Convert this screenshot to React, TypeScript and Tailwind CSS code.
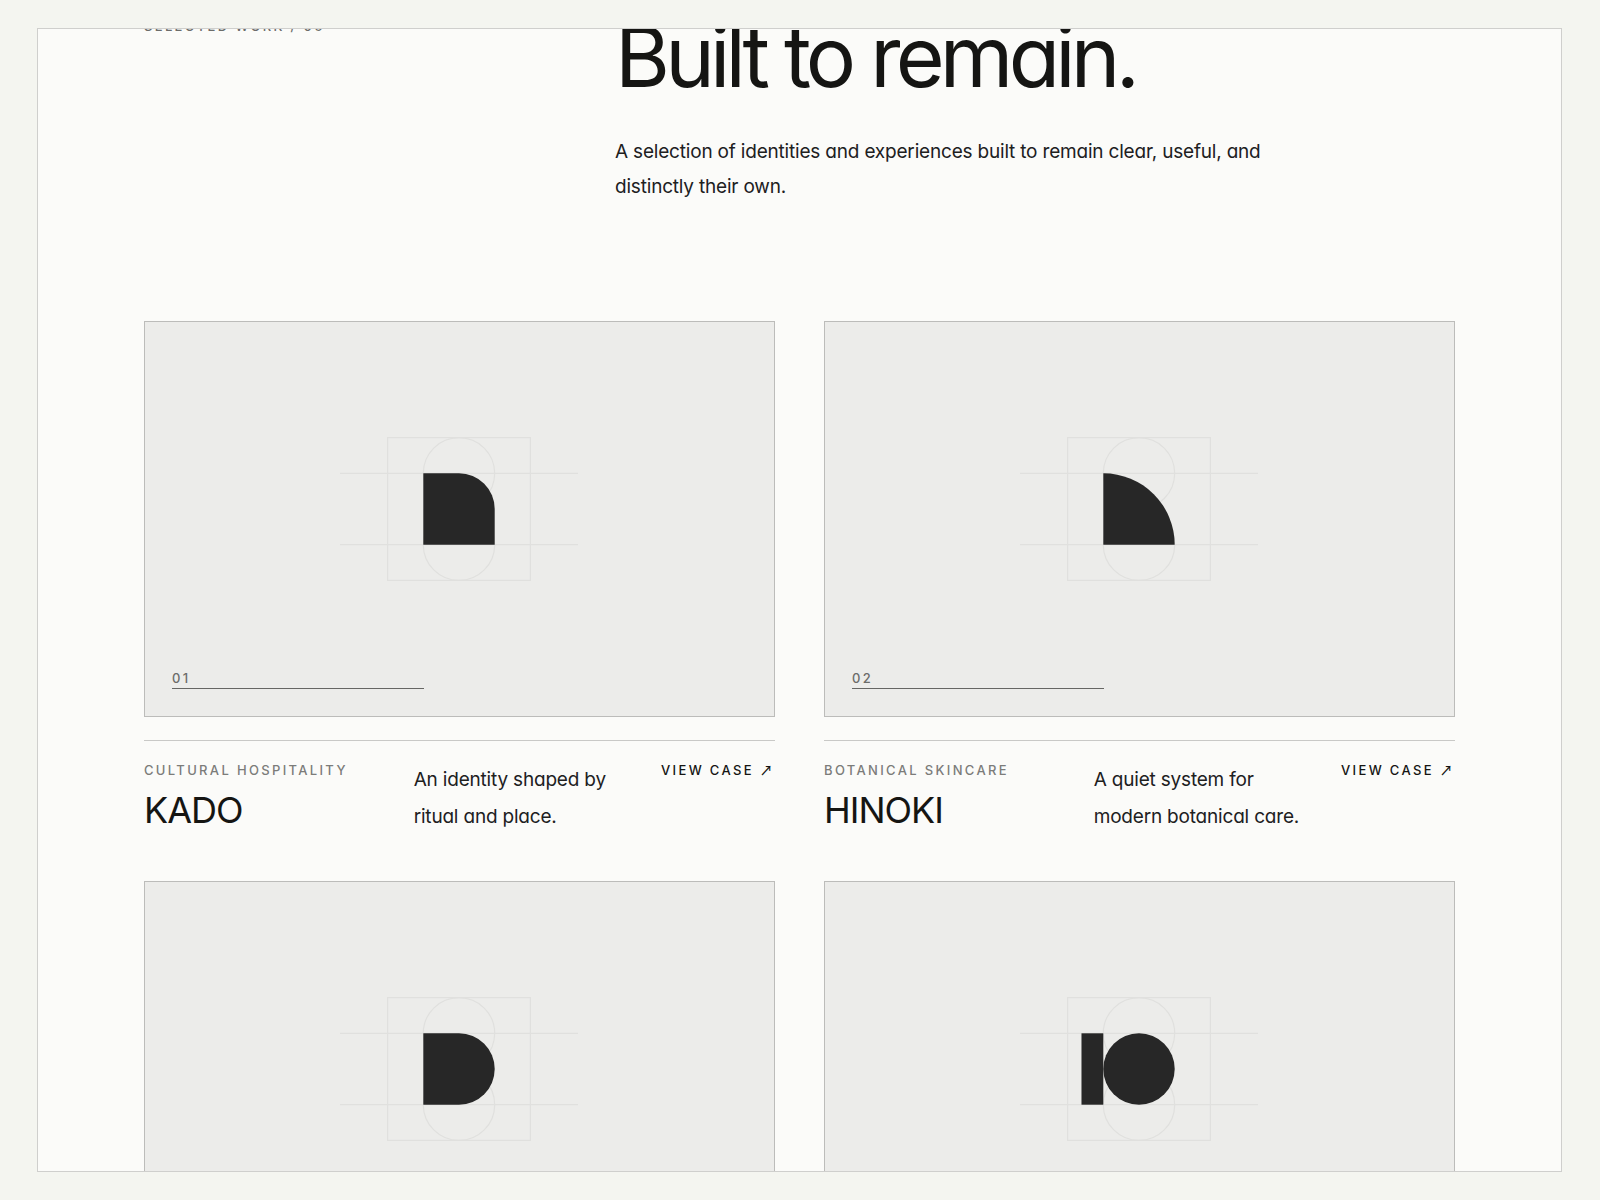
type Mark = "arch" | "quarter" | "dee" | "bar";

type Project = {
  number: string;
  category: string;
  name: string;
  summary: string;
  mark: Mark;
};

const featured: Project[] = [
  { number: "01", category: "Cultural hospitality", name: "KADO", summary: "An identity shaped by ritual and place.", mark: "arch" },
  { number: "02", category: "Botanical skincare", name: "HINOKI", summary: "A quiet system for modern botanical care.", mark: "quarter" },
];

const more: { number: string; mark: Mark }[] = [
  { number: "03", mark: "dee" },
  { number: "04", mark: "bar" },
];

function MarkShape({ mark }: { mark: Mark }) {
  if (mark === "arch") return <path d="M84 84H120A36 36 0 0 1 156 120V156H84Z" />;
  if (mark === "quarter") return <path d="M84 84A72 72 0 0 1 156 156H84Z" />;
  if (mark === "dee") return <path d="M84 84H120A36 36 0 0 1 120 156H84Z" />;
  return (
    <>
      <rect x="62" y="84" width="22" height="72" />
      <circle cx="120" cy="120" r="36" />
    </>
  );
}

function Construction({ mark }: { mark: Mark }) {
  return (
    <svg viewBox="0 0 240 240" className="size-[238px]" aria-hidden="true">
      <g fill="none" stroke="#e0e0de" strokeWidth="1.2">
        <rect x="48" y="48" width="144" height="144" />
        <circle cx="120" cy="84" r="36" />
        <circle cx="120" cy="156" r="36" />
        <path d="M0 84H240M0 156H240" />
      </g>
      <g fill="#272727">
        <MarkShape mark={mark} />
      </g>
    </svg>
  );
}

function Plate({ number, mark }: { number: string; mark: Mark }) {
  return (
    <div className="relative flex aspect-[631/396] items-center justify-center border border-[#bcbcba] bg-[#ececea] pr-0.5 pb-5">
      <Construction mark={mark} />
      <span className="absolute bottom-[27px] left-[27px] w-2/5 border-b border-[#666664] text-[13px] leading-5 font-medium tracking-[0.18em] text-[#6c6c6a]">
        {number}
      </span>
    </div>
  );
}

export default function App() {
  return (
    <main className="h-screen bg-[#f4f5f0] py-7 pr-[38px] pl-[37px] font-['Inter','Noto_Sans',sans-serif] text-[#151513] [font-feature-settings:'cv11']">
      <div className="h-full overflow-hidden border border-[#cfcfcd] bg-[#fbfbf9] px-[106px]">
        <section className="-mt-[12px]">
          <header className="grid grid-cols-[1fr_2fr] gap-[51px]">
            <p className="text-[13px] leading-[18px] font-medium tracking-[0.18em] text-[#6c6c6a] uppercase">Selected work / 06</p>
            <div>
              <h2 className="text-[84px] leading-[80px] tracking-[-0.057em]">Built to remain.</h2>
              <p className="mt-[37px] max-w-[660px] text-[19px] leading-[35px] tracking-[-0.01em] text-[#20201e]">
                A selection of identities and experiences built to remain clear, useful, and distinctly their own.
              </p>
            </div>
          </header>

          <div className="mt-[117px] grid grid-cols-2 gap-x-[49px] gap-y-[46px]">
            {featured.map((p) => (
              <article key={p.number}>
                <Plate number={p.number} mark={p.mark} />
                <div className="mt-[23px] grid grid-cols-[1.1fr_1fr_auto] gap-6 border-t border-[#c9c9c7] pt-5">
                  <div>
                    <p className="text-[13px] leading-[18px] font-medium tracking-[0.18em] text-[#7c7c7a] uppercase">{p.category}</p>
                    <h3 className="mt-2 text-[36px] leading-[46px] tracking-[-1px]">{p.name}</h3>
                  </div>
                  <p className="text-[19px] leading-[37px] tracking-[-0.01em] text-[#20201e]">{p.summary}</p>
                  <a
                    href={`#${p.name.toLowerCase()}`}
                    className="self-start text-[13px] leading-[18px] font-medium tracking-[0.18em] uppercase"
                  >
                    View case <span className="font-['Noto_Sans_CJK_JP',sans-serif] leading-none">↗</span>
                  </a>
                </div>
              </article>
            ))}
            {more.map((p) => (
              <article key={p.number}>
                <Plate number={p.number} mark={p.mark} />
              </article>
            ))}
          </div>
        </section>
      </div>
    </main>
  );
}
